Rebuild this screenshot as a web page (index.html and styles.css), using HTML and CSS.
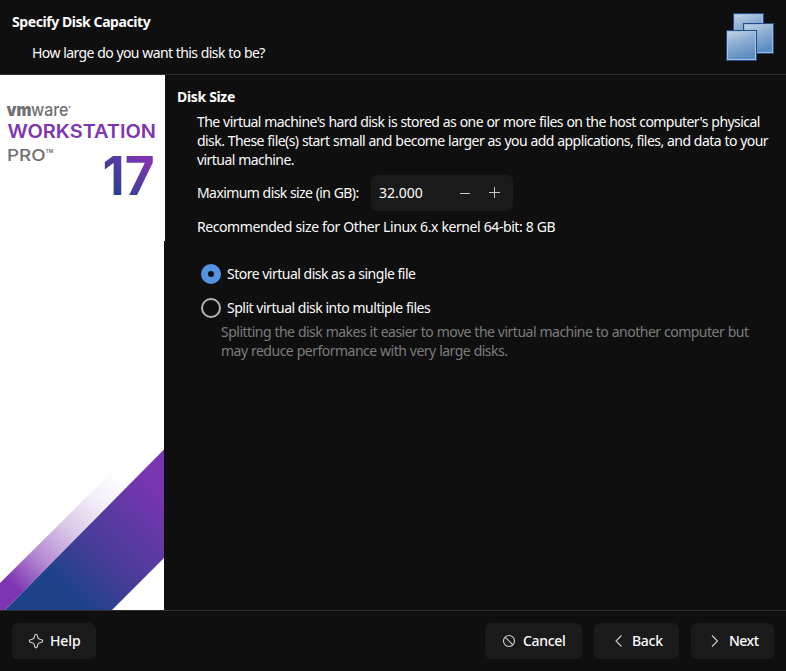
FILE: index.html
```html
<!DOCTYPE html>
<html lang="en">
<head>
<meta charset="utf-8">
<title>Specify Disk Capacity</title>
<link rel="stylesheet" href="styles.css">
</head>
<body>
<div class="wizard">
  <header class="header">
    <div class="titles">
      <h1 class="title">Specify Disk Capacity</h1>
      <p class="subtitle">How large do you want this disk to be?</p>
    </div>
    <svg class="vm-icon" width="48" height="48" viewBox="0 0 48 48">
      <defs>
        <linearGradient id="pane" x1="0" y1="0" x2=".35" y2="1">
          <stop offset="0" stop-color="#c9d6e6"/><stop offset=".45" stop-color="#8fb0d3"/><stop offset="1" stop-color="#5d8cc0"/>
        </linearGradient>
      </defs>
      <g stroke="#254c8a">
        <rect x="7.500" y=".5" width="30" height="30" fill="url(#pane)"/>
        <rect x="8.500" y="1.500" width="28" height="28" fill="none" stroke="#9dbbdc"/>
        <rect x="17.500" y="10.500" width="30" height="30" fill="url(#pane)"/>
        <rect x="18.500" y="11.500" width="28" height="28" fill="none" stroke="#9dbbdc"/>
        <path d="M19 30.500h18.500V12" fill="none" stroke="#8db0d9" stroke-opacity=".35"/>
        <rect x=".5" y="17.500" width="30" height="30" fill="url(#pane)"/>
        <rect x="1.500" y="18.500" width="28" height="28" fill="none" stroke="#a5c2e3"/>
      </g>
    </svg>
  </header>
  <main class="main">
    <svg class="banner" width="165" height="535" viewBox="0 0 165 535">
      <defs>
        <linearGradient id="num" gradientUnits="userSpaceOnUse" x1="110" y1="121" x2="146" y2="85">
          <stop offset="0" stop-color="#1d428a"/><stop offset="1" stop-color="#7f35b2"/>
        </linearGradient>
        <linearGradient id="band" gradientUnits="userSpaceOnUse" x1="60" y1="510" x2="158" y2="412">
          <stop offset="0" stop-color="#1d428a"/><stop offset=".35" stop-color="#453d98"/><stop offset="1" stop-color="#7a35b0"/>
        </linearGradient>
        <linearGradient id="fade" gradientUnits="userSpaceOnUse" x1="14" y1="511" x2="124" y2="401">
          <stop offset="0" stop-color="#7f35b2"/><stop offset=".25" stop-color="#b68cd3"/><stop offset=".5" stop-color="#d9c6e8"/><stop offset=".75" stop-color="#f3edf8"/><stop offset="1" stop-color="#fff"/>
        </linearGradient>
      </defs>
      <path d="M0 0h165v166h-1v369H0z" fill="#fff"/>
      <path d="M0 508L132 377L164 374L5 535H0z" fill="url(#fade)"/>
      <path d="M164 374.500V483L112 535H5z" fill="url(#band)"/>
      <g class="logo">
        <text x="6.500" y="41" class="grey vm" textLength="25" lengthAdjust="spacingAndGlyphs">vm</text>
        <text x="31" y="41" class="grey ware" textLength="37.500" lengthAdjust="spacingAndGlyphs">ware</text>
        <circle cx="69.500" cy="32" r="1" fill="#88888b"/>
        <text x="7.500" y="63" class="product" textLength="148.500" lengthAdjust="spacingAndGlyphs">WORKSTATION</text>
        <text x="7" y="86" class="grey pro" textLength="38.500" lengthAdjust="spacingAndGlyphs">PRO</text>
        <text x="45.500" y="78" class="grey tm" textLength="8" lengthAdjust="spacingAndGlyphs">TM</text>
        <text x="102.500" y="120" class="number" textLength="52" lengthAdjust="spacingAndGlyphs">17</text>
      </g>
    </svg>
    <section class="content">
      <h2 class="section-title">Disk Size</h2>
      <p class="intro">The virtual machine's hard disk is stored as one or more files on the host computer's physical<br>disk. These file(s) start small and become larger as you add applications, files, and data to your<br>virtual machine.</p>
      <div class="size-row">
        <span class="size-label">Maximum disk size (in GB):</span>
        <div class="spinner">
          <span class="value">32.000</span>
          <svg width="12" height="12" viewBox="0 0 12 12"><path d="M1 6.500h10" stroke="#c8c8c8"/></svg>
          <svg class="plus" width="12" height="12" viewBox="0 0 12 12"><path d="M0 5.500h11M5.500 0v11" stroke="#c8c8c8"/></svg>
        </div>
      </div>
      <p class="recommended">Recommended size for Other Linux 6.x kernel 64-bit: 8 GB</p>
      <div class="option"><span class="radio checked"></span><span class="single">Store virtual disk as a single file</span></div>
      <div class="option second"><span class="radio"></span><span class="split">Split virtual disk into multiple files</span></div>
      <p class="hint">Splitting the disk makes it easier to move the virtual machine to another computer but<br>may reduce performance with very large disks.</p>
    </section>
  </main>
  <footer class="footer">
    <div class="button help">
      <svg width="16" height="16" viewBox="0 0 16 16"><path d="M8 1.300Q9.300 1.300 9.700 4.200Q10 6 11.800 6.300Q14.700 6.700 14.700 8Q14.700 9.300 11.800 9.700Q10 10 9.700 11.800Q9.300 14.700 8 14.700Q6.700 14.700 6.300 11.800Q6 10 4.200 9.700Q1.300 9.300 1.300 8Q1.300 6.700 4.200 6.300Q6 6 6.300 4.200Q6.700 1.300 8 1.300z"/></svg>
      <span>Help</span>
    </div>
    <div class="button cancel">
      <svg width="16" height="16" viewBox="0 0 16 16"><circle cx="8" cy="8" r="5.500"/><path d="M4.100 4.100l7.800 7.800"/></svg>
      <span>Cancel</span>
    </div>
    <div class="button back">
      <svg width="16" height="16" viewBox="0 0 16 16"><path d="M11.500 2.500L6 8l5.500 5.500"/></svg>
      <span>Back</span>
    </div>
    <div class="button next">
      <svg width="16" height="16" viewBox="0 0 16 16"><path d="M5 2.500L10.500 8L5 13.500"/></svg>
      <span>Next</span>
    </div>
  </footer>
</div>
</body>
</html>
```
FILE: styles.css
```css
* { box-sizing: border-box; }
body {
  margin: 0;
  background: #0f0f0f;
  color: #fcfcfc;
  font: 14px/19px "Noto Sans", sans-serif;
}
h1, h2, p { margin: 0; font-size: inherit; }
svg { display: block; flex: none; }
.wizard { width: 786px; height: 671px; display: flex; flex-direction: column; }
.header {
  height: 75px;
  display: flex;
  justify-content: space-between;
  padding: 12px 12px 0;
  border-bottom: 1px solid #2e2e2e;
}
.vm-icon { margin-top: 1px; }
.title { letter-spacing: -.43px; }
.subtitle { margin: 12px 0 0 20px; letter-spacing: -.59px; word-spacing: .3px; }
.main { flex: 1; display: flex; min-height: 0; }
.content { padding: 12px 0 0 12px; white-space: nowrap; }
.section-title { letter-spacing: -.33px; }
.intro { margin: 6px 0 0 20px; letter-spacing: -.56px; word-spacing: .35px; }
.size-row { display: flex; align-items: center; margin: 6px 0 0 20px; }
.size-label { width: 174px; padding-bottom: 2px; letter-spacing: -.58px; word-spacing: .2px; }
.spinner {
  width: 142px;
  height: 36px;
  display: flex;
  align-items: center;
  padding-left: 8px;
  border-radius: 6px;
  background: #1a1a1a;
}
.value { width: 80px; padding-bottom: 2px; }
.plus { margin-left: 18px; }
.recommended { margin: 6px 0 0 20px; letter-spacing: -.42px; word-spacing: .25px; }
.option { display: flex; align-items: center; gap: 6px; height: 20px; margin: 28px 0 0 24px; }
.option.second { margin-top: 14px; }
.radio { width: 20px; height: 20px; border: 2px solid #b5b5b5; border-radius: 50%; }
.radio.checked { border: 7px solid #5294e2; }
.single, .split { padding-bottom: 2px; }
.single { letter-spacing: -.5px; }
.split { letter-spacing: -.48px; }
.hint { margin: 4px 0 0 44px; color: #7c7c7c; letter-spacing: -.5px; word-spacing: .25px; }
.footer {
  height: 61px;
  display: flex;
  gap: 12px;
  padding: 12px 12px 0;
  border-top: 1px solid #2e2e2e;
}
.button {
  height: 36px;
  display: flex;
  align-items: center;
  gap: 6px;
  padding-left: 16px;
  border-radius: 6px;
  background: #1a1a1a;
  font-weight: 500;
  letter-spacing: -.3px;
}
.button span { padding-bottom: 2px; }
.button svg { fill: none; stroke: #cfcfcf; stroke-width: 1.1; }
.help { width: 84px; margin-right: auto; letter-spacing: -.1px; }
.cancel { width: 97px; }
.back { width: 85px; }
.next { width: 83px; letter-spacing: -.5px; }
.logo { font-family: Inter, sans-serif; }
.grey { fill: #717074; }
.vm { font-size: 17.5px; font-weight: 900; }
.ware { font-size: 17.5px; font-weight: 500; }
.product { fill: #7f35b2; font-size: 18.5px; font-weight: 600; }
.pro { font-size: 16px; font-weight: 500; }
.tm { font-size: 5px; font-weight: 600; }
.number { fill: url(#num); font-size: 54px; font-weight: 700; }
```
